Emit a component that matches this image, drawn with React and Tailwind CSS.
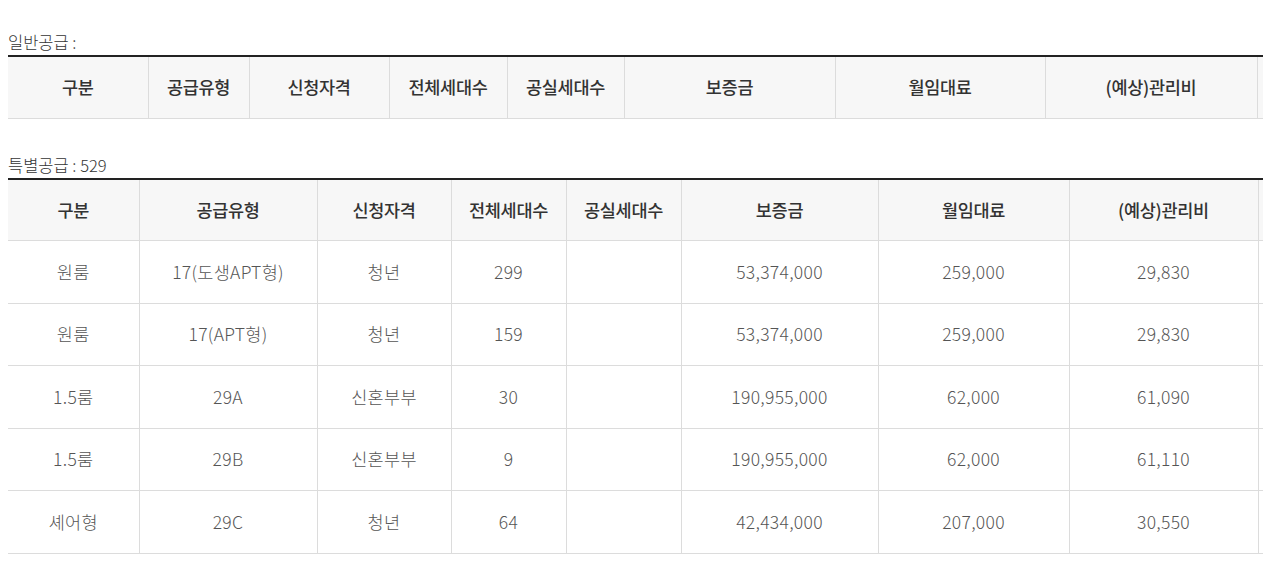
import React from 'react'

const heads = ['구분', '공급유형', '신청자격', '전체세대수', '공실세대수', '보증금', '월임대료', '(예상)관리비', '']

const generalCols = [140, 101, 140, 118, 117, 211, 210, 212, 180]
const specialCols = [131, 178, 134, 115, 115, 197, 191, 189, 180]

const rows = [
  ['원룸', '17(도생APT형)', '청년', '299', '', '53,374,000', '259,000', '29,830', ''],
  ['원룸', '17(APT형)', '청년', '159', '', '53,374,000', '259,000', '29,830', ''],
  ['1.5룸', '29A', '신혼부부', '30', '', '190,955,000', '62,000', '61,090', ''],
  ['1.5룸', '29B', '신혼부부', '9', '', '190,955,000', '62,000', '61,110', ''],
  ['셰어형', '29C', '청년', '64', '', '42,434,000', '207,000', '30,550', ''],
]

function SupplyTable({ cols, body = [] }) {
  const width = cols.reduce((a, b) => a + b, 0)
  return (
    <table
      className="table-fixed border-collapse border-t-2 border-[#222]"
      style={{ width }}
    >
      <colgroup>
        {cols.map((w, i) => (
          <col key={i} style={{ width: w }} />
        ))}
      </colgroup>
      <thead>
        <tr className="h-[62px] bg-[#f7f7f7]">
          {heads.map((h, i) => (
            <th
              key={i}
              className="border-b border-r border-[#dcdcdc] p-0 text-center text-[17.5px] font-medium text-[#333] tracking-[-0.3px]"
            >
              {h}
            </th>
          ))}
        </tr>
      </thead>
      <tbody>
        {body.map((r, ri) => (
          <tr key={ri} className="h-[62.5px]">
            {r.map((c, ci) => (
              <td
                key={ci}
                className="border-b border-r border-[#dcdcdc] p-0 text-center text-[17.5px] font-light text-[#555] tracking-[0.3px]"
              >
                {c}
              </td>
            ))}
          </tr>
        ))}
      </tbody>
    </table>
  )
}

export default function App() {
  return (
    <div
      className="w-[1263px] h-[562px] overflow-hidden bg-white pl-2"
      style={{ fontFamily: '"Noto Sans CJK KR", "Noto Sans", sans-serif' }}
    >
      <p className="mt-[32px] mb-[3px] h-[20px] text-[16.5px] leading-[20px] font-light text-[#333]">
        일반공급 :
      </p>
      <SupplyTable cols={generalCols} />

      <p className="mt-[36px] mb-[3px] h-[20px] text-[16.5px] leading-[20px] font-light text-[#333]">
        특별공급 : 529
      </p>
      <SupplyTable cols={specialCols} body={rows} />
    </div>
  )
}
